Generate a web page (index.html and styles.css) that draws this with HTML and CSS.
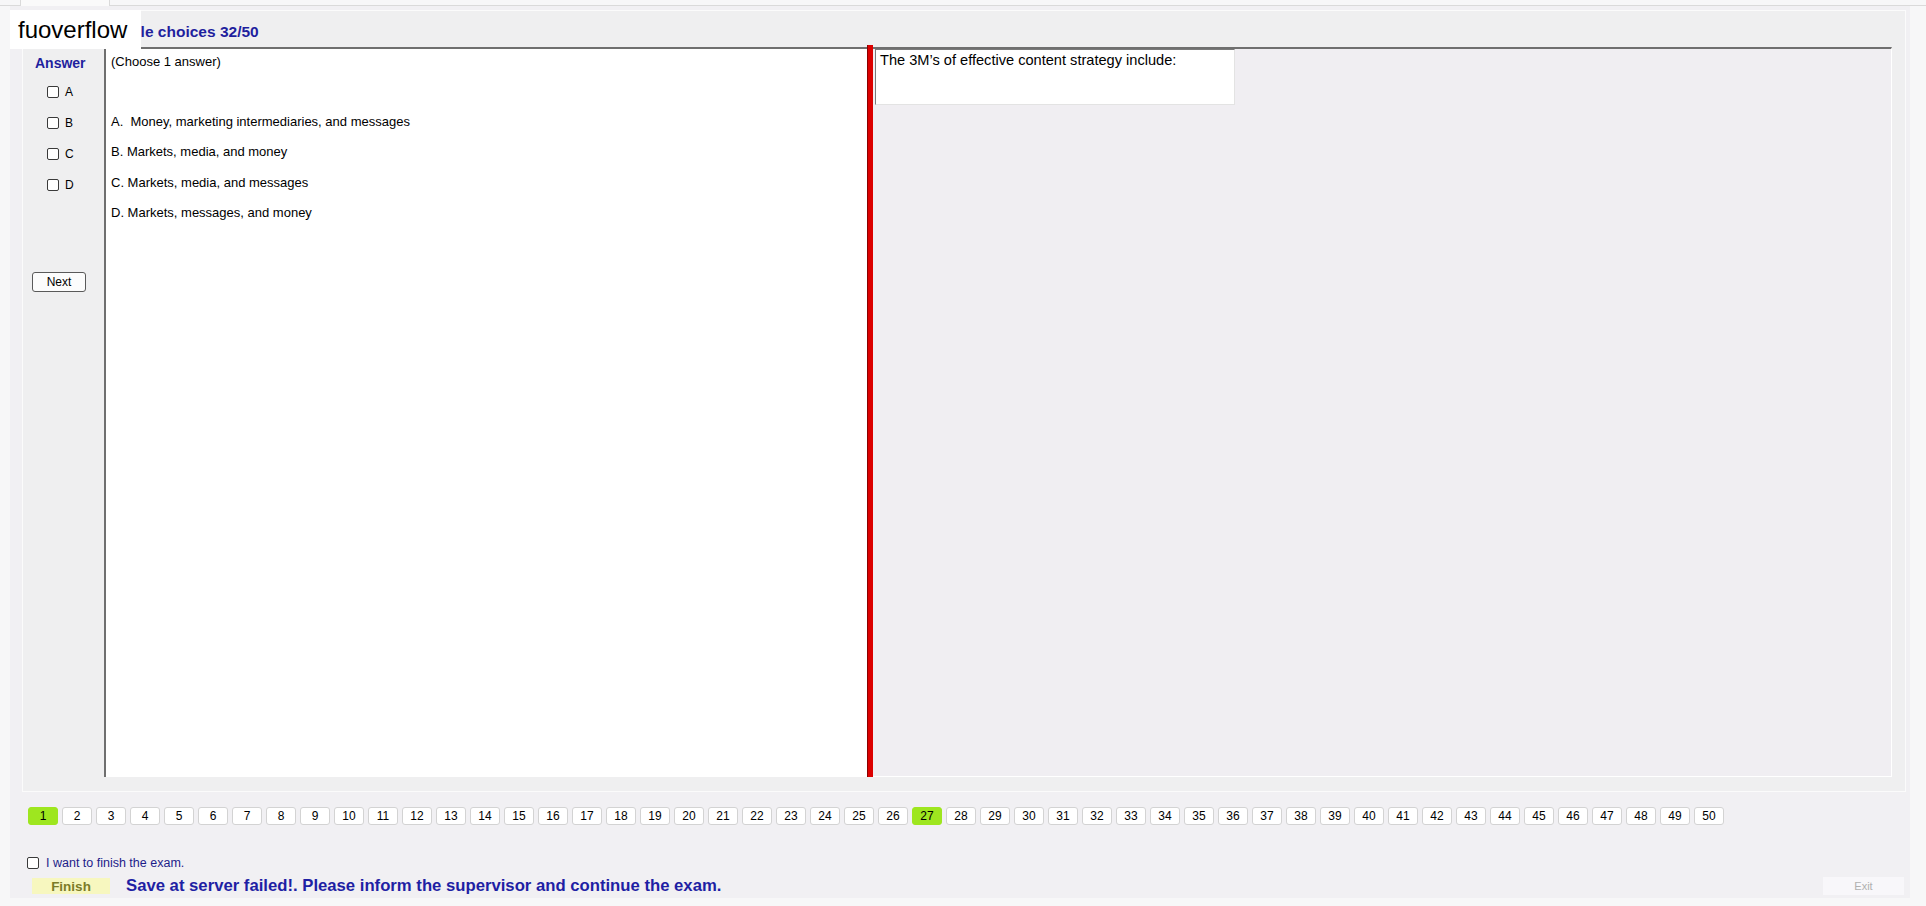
FILE: index.html
```html
<!DOCTYPE html>
<html lang="en">
<head>
    <meta charset="UTF-8">
    <meta name="viewport" content="width=device-width, initial-scale=1.0">
    <title>Exam Client</title>
    <link rel="stylesheet" href="styles.css">
</head>
<body>

    <!-- Tab strip (the Question tab sits just above the window) -->
    <div class="tabstrip"><div class="tab"></div></div>

    <div id="window">

        <!-- Question group -->
        <div class="group">
            <h2 class="section-title">Multiple choices 32/50</h2>

            <div class="workspace">
                <!-- Answer column with the A-D boxes -->
                <div class="answer-col">
                    <div class="answer-head">Answer</div>
                    <label class="choice"><input type="checkbox"> A</label>
                    <label class="choice"><input type="checkbox"> B</label>
                    <label class="choice"><input type="checkbox"> C</label>
                    <label class="choice"><input type="checkbox"> D</label>
                    <button class="next-button">Next</button>
                </div>

                <!-- Options -->
                <div class="question-pane">
                    <p class="hint">(Choose 1 answer)</p>
                    <ul class="options">
                        <li>A.&nbsp; Money, marketing intermediaries, and messages</li>
                        <li>B.&nbsp;Markets, media, and money</li>
                        <li>C.&nbsp;Markets, media, and messages</li>
                        <li>D.&nbsp;Markets, messages, and money</li>
                    </ul>
                </div>

                <div class="splitter"></div>

                <!-- Question stem -->
                <div class="stem-pane">
                    <div class="stem-box">The 3M’s of effective content strategy include:</div>
                </div>
            </div>
        </div>

        <!-- Question number buttons, filled in below -->
        <div class="pager" id="pager"></div>

        <div class="finish-row">
            <label class="finish-check"><input type="checkbox"> I want to finish the exam.</label>
        </div>

        <div class="action-row">
            <button class="finish-button">Finish</button>
            <span class="status-msg">Save at server failed!. Please inform the supervisor and continue the exam.</span>
            <button class="exit-button">Exit</button>
        </div>
    </div>

    <div class="brand">fuoverflow</div>

    <script>
        // build the 1..50 question buttons, answered ones are green
        let answered = [1, 27];
        let pager = document.getElementById("pager");
        for (let i = 1; i <= 50; i++) {
            let btn = document.createElement("button");
            btn.className = "page-btn";
            if (answered.indexOf(i) !== -1) {
                btn.classList.add("done");
            }
            btn.textContent = i;
            pager.appendChild(btn);
        }
    </script>

</body>
</html>
```

FILE: styles.css
```css
/* General styles */
body {
    margin: 0;
    background-color: #f7f7f8;
    font-family: "Liberation Sans", Arial, sans-serif;
    color: #000;
}

button {
    font-family: "Liberation Sans", Arial, sans-serif;
    padding: 0;
    cursor: pointer;
}

/* Tab strip at the very top */
.tabstrip {
    height: 5px;
    border-bottom: 1px solid #dadada;
    padding-left: 20px;
    display: flex;
}

.tab {
    width: 88px;
    height: 6px;
    background-color: #fafafa;
    border-left: 1px solid #dadada;
    border-right: 1px solid #dadada;
}

/* Main window area */
#window {
    margin: 0 16px 0 10px;
    padding: 4px 0 3px 0;
    background-color: #f1f0f3;
}

/* Watermark label over the top left corner */
.brand {
    position: absolute;
    top: 10px;
    left: 10px;
    width: 131px;
    height: 39px;
    box-sizing: border-box;
    padding-left: 8px;
    background-color: #fff;
    font-size: 24px;
    line-height: 39px;
}

/* Question group box */
.group {
    margin: 0 4px 0 12px;
    padding: 12px 13px 14px 0;
    background-color: #efeff0;
    border: 1px solid #fbfbfb;
}

.section-title {
    margin: 0;
    padding-left: 72px;
    font-size: 15.5px;
    line-height: 18px;
    font-weight: bold;
    color: #1f1f9e;
}

.workspace {
    display: grid;
    grid-template-columns: 81px 763px 6px 1fr;
    height: 730px;
    margin-top: 6px;
}

/* Answer column */
.answer-col {
    padding-top: 8px;
}

.answer-head {
    padding-left: 12px;
    font-size: 14px;
    line-height: 16px;
    font-weight: bold;
    color: #1f1f9e;
}

.choice {
    display: flex;
    align-items: center;
    height: 31px;
    padding-left: 24px;
    font-size: 12px;
}

.answer-head + .choice {
    margin-top: 5px;
}

.choice input,
.finish-check input {
    appearance: none;
    width: 12px;
    height: 12px;
    margin: 0 6px 0 0;
    border: 1px solid #3a3a3a;
    border-radius: 2px;
    background-color: #fff;
}

.next-button {
    display: block;
    width: 54px;
    height: 20px;
    margin: 72px 0 0 9px;
    background-color: #fcfcfc;
    border: 1px solid #5a5a5a;
    border-radius: 3px;
    font-size: 12px;
}

/* Options pane */
.question-pane {
    background-color: #fff;
    border-left: 2px solid #6f6f6f;
    border-top: 2px solid #6f6f6f;
    padding: 5px 0 0 5px;
}

.hint {
    margin: 0;
    font-size: 13px;
    line-height: 15px;
}

.options {
    list-style: none;
    margin: 38px 0 0 0;
    padding: 0;
    font-size: 13px;
    line-height: 30.4px;
}

/* Red divider between the panes */
.splitter {
    margin-top: -2px;
    background-color: #dc0000;
    border-left: 1px solid #8a0000;
}

/* Stem pane */
.stem-pane {
    background-color: #f0eef2;
    border-top: 2px solid #6f6f6f;
    border-right: 1px solid #fff;
    border-bottom: 1px solid #fff;
}

.stem-box {
    width: 360px;
    height: 56px;
    box-sizing: border-box;
    margin-left: 2px;
    padding: 2px 4px;
    background-color: #fff;
    border-top: 1px solid #7a7a7a;
    border-left: 1px solid #7a7a7a;
    border-right: 1px solid #e3e3e3;
    border-bottom: 1px solid #e3e3e3;
    font-size: 14.6px;
    line-height: 17px;
}

/* Question number buttons */
.pager {
    display: flex;
    gap: 4px;
    margin-top: 15px;
    padding-left: 18px;
}

.page-btn {
    width: 30px;
    height: 18px;
    background-color: #fff;
    border: 1px solid #d3d3d3;
    border-radius: 3px;
    font-size: 12px;
    color: #000;
}

.page-btn.done {
    background-color: #9ee61f;
    border-color: #9ee61f;
}

/* Finish controls */
.finish-row {
    height: 16px;
    margin-top: 30px;
    padding-left: 17px;
}

.finish-check {
    display: flex;
    align-items: center;
    height: 16px;
    font-size: 12.5px;
    color: #1d1d8a;
}

.finish-check input {
    margin-right: 7px;
}

.action-row {
    display: flex;
    align-items: center;
    height: 18px;
    margin-top: 6px;
    padding-left: 22px;
}

.finish-button {
    width: 78px;
    height: 16px;
    background-color: #f7f7bf;
    border: none;
    font-size: 13.5px;
    font-weight: bold;
    color: #7c7c28;
}

.status-msg {
    margin-left: 16px;
    font-size: 16.7px;
    font-weight: bold;
    color: #1f1fa4;
}

.exit-button {
    width: 81px;
    height: 18px;
    margin-left: auto;
    margin-right: 6px;
    background-color: #f8f7fa;
    border: none;
    font-size: 11px;
    color: #b0b0b0;
}
```
